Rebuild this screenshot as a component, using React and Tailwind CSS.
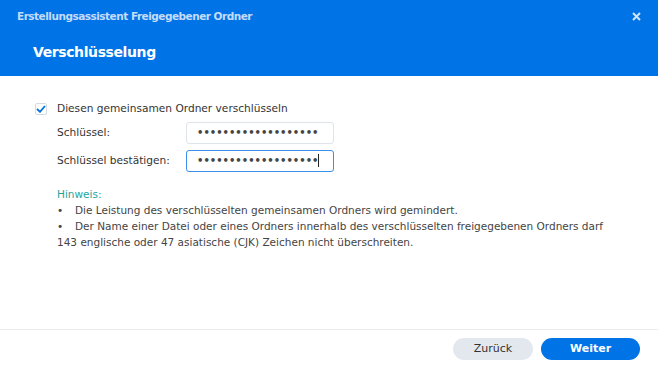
import React from 'react'

const dots = '•••••••••••••••••••'

export default function App() {
  return (
    <div className="w-[658px] h-[367px] bg-white flex flex-col overflow-hidden" style={{ fontFamily: '"DejaVu Sans", Verdana, sans-serif' }}>
      <div className="h-[76px] bg-[#0073e6] flex flex-col px-[17px] pt-[9px]">
        <div className="flex items-center justify-between">
          <span className="text-[10.5px] font-bold text-[#c4dcfa] tracking-[-0.5px]">Erstellungsassistent Freigegebener Ordner</span>
          <svg width="9" height="9" viewBox="0 0 9 9">
            <path d="M1 1L8 8M8 1L1 8" stroke="#cfe4ff" strokeWidth="2" />
          </svg>
        </div>
        <div className="pl-[16px] mt-[17px] text-[14px] font-bold text-white tracking-[-0.4px]">Verschlüsselung</div>
      </div>

      <div className="flex-1 flex flex-col pl-[35px] pt-[25px] text-[10.6px] text-[#333]">
        <label className="flex items-center gap-[10px]">
          <span className="w-[12px] h-[12px] rounded-[2px] border border-[#d5dbe3] flex items-center justify-center">
            <svg width="10" height="8" viewBox="0 0 10 8">
              <path d="M1 4L4 6.8L9 1" stroke="#0070e0" strokeWidth="1.8" fill="none" />
            </svg>
          </span>
          <span>Diesen gemeinsamen Ordner verschlüsseln</span>
        </label>

        <div className="pl-[22px] mt-[5px] flex flex-col gap-[6px]">
          <div className="flex items-center">
            <span className="w-[129px]">Schlüssel:</span>
            <div className="w-[148px] h-[22px] rounded-[3px] border border-[#dfe4ea] flex items-center px-[10px] text-[10px] font-bold text-[#444]">{dots}</div>
          </div>
          <div className="flex items-center">
            <span className="w-[129px]">Schlüssel bestätigen:</span>
            <div className="w-[148px] h-[22px] rounded-[3px] border border-[#3b8fe8] flex items-center px-[10px] text-[10px] font-bold text-[#444]">
              {dots}<span className="w-px h-[13px] bg-[#222]" />
            </div>
          </div>
        </div>

        <div className="pl-[22px] mt-[14px] text-[10.5px] leading-[16px] text-[#444]">
          <div className="text-[#1ea5a0]">Hinweis:</div>
          <div className="flex"><span className="w-[18px]">•</span>Die Leistung des verschlüsselten gemeinsamen Ordners wird gemindert.</div>
          <div className="flex"><span className="w-[18px]">•</span>Der Name einer Datei oder eines Ordners innerhalb des verschlüsselten freigegebenen Ordners darf</div>
          <div>143 englische oder 47 asiatische (CJK) Zeichen nicht überschreiten.</div>
        </div>
      </div>

      <div className="h-[38px] border-t border-[#ececec] flex items-start justify-end gap-[8px] pr-[18px] pt-[8px]">
        <button className="w-[80px] h-[22px] rounded-full bg-[#e3e8ef] text-[11px] text-[#333]">Zurück</button>
        <button className="w-[99px] h-[22px] rounded-full bg-[#0073e6] text-[11px] font-bold text-white">Weiter</button>
      </div>
    </div>
  )
}
